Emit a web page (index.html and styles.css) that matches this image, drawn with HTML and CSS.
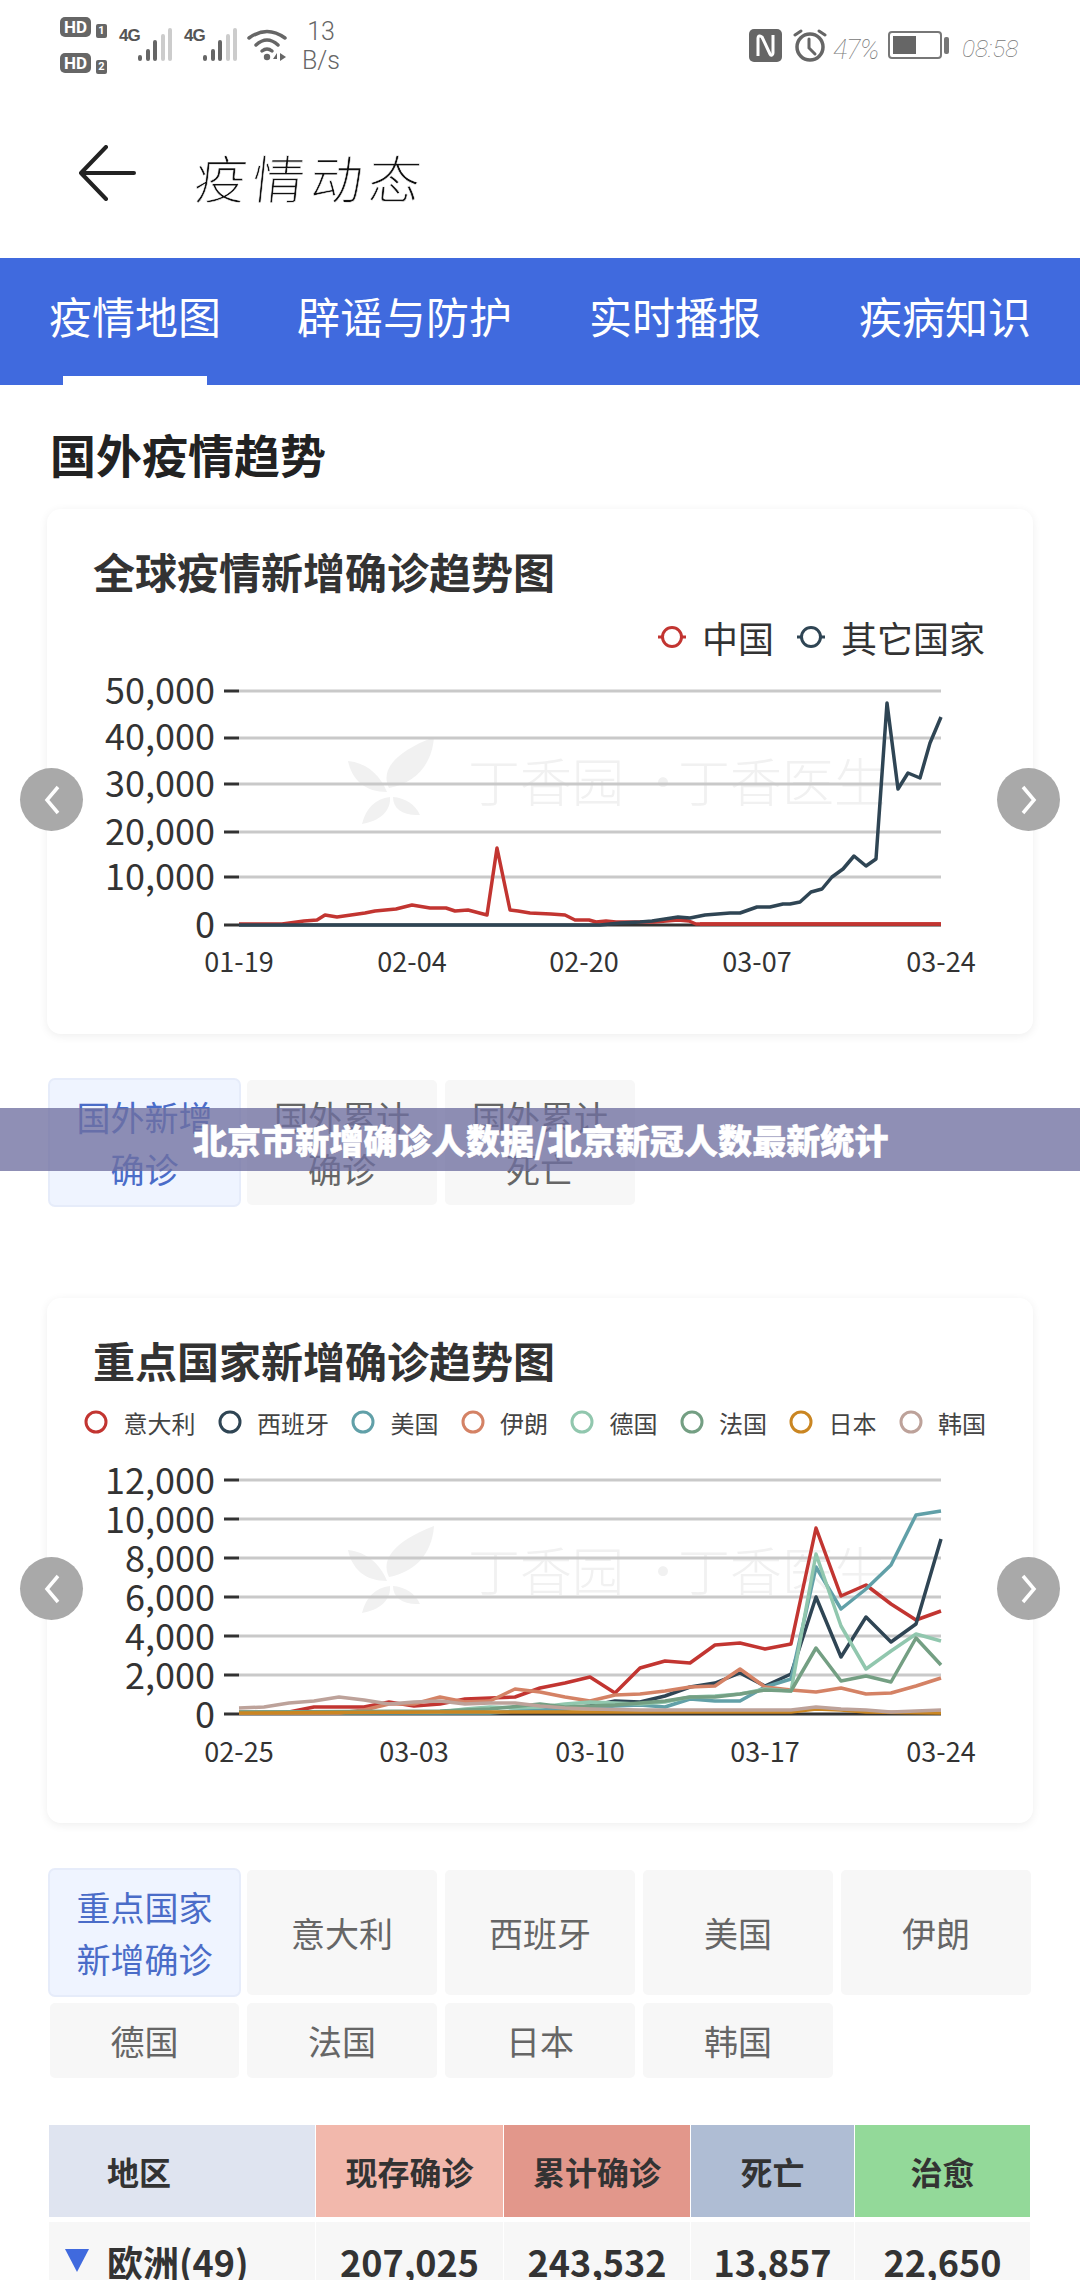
FILE: index.html
```html
<!DOCTYPE html>
<html lang="zh-CN">
<head>
<meta charset="utf-8">
<title>疫情动态</title>
<link rel="stylesheet" href="styles.css">
</head>
<body>
<div class="page">
  <div class="status">
    <div class="status-left">
      <div class="hd-stack">
        <div class="hd-row"><span class="hd">HD</span><span class="sim">1</span></div>
        <div class="hd-row"><span class="hd">HD</span><span class="sim">2</span></div>
      </div>
      <div class="signal"><span class="net">4G</span>
        <svg class="bars" width="36" height="33" viewBox="0 0 36 33"><g stroke-width="4" stroke-linecap="round" fill="none"><path class="bar-on" d="M3 31v-2M11 31v-8M18 31V14"/><path class="bar-off" d="M26 31V8M33 31V2"/></g></svg>
      </div>
      <div class="signal"><span class="net">4G</span>
        <svg class="bars" width="36" height="33" viewBox="0 0 36 33"><g stroke-width="4" stroke-linecap="round" fill="none"><path class="bar-on" d="M3 31v-2M11 31v-8M18 31V14"/><path class="bar-off" d="M26 31V8M33 31V2"/></g></svg>
      </div>
      <svg class="wifi" width="42" height="34" viewBox="0 0 42 34"><g fill="none" stroke="#666" stroke-width="3.5" stroke-linecap="round"><path d="M2 10Q20-3 38 10"/><path d="M9 17Q20 7 31 17"/><path d="M15 23Q20 19 25 23"/></g><circle cx="20" cy="29" r="3.2" fill="#666"/><path d="M26 31l4-6v6zM33 25l6 4-6 4z" fill="#666"/></svg>
      <div class="speed"><span>13</span><span>B/s</span></div>
    </div>
    <div class="status-right">
      <svg width="33" height="33" viewBox="0 0 33 33"><rect width="33" height="33" rx="5" fill="#666"/><path d="M9 27V9c0-2 2-3 4-1l8 17c1 2 3 1 3-1V6" fill="none" stroke="#fff" stroke-width="3"/></svg>
      <svg class="alarm" width="34" height="34" viewBox="0 0 34 34"><g fill="none" stroke="#666" stroke-linecap="round"><circle cx="17" cy="19" r="13" stroke-width="3.5"/><path d="M16 11v9l6 6" stroke-width="3"/><path d="M2 7l6-4M32 7l-6-4" stroke-width="3"/></g></svg>
      <span class="battery-pct">47%</span>
      <span class="battery"><span class="battery-fill"></span></span>
      <span class="battery-cap"></span>
      <span class="clock">08:58</span>
    </div>
  </div>

  <header class="topbar">
    <svg class="back" width="58" height="56" viewBox="0 0 58 56"><path d="M28 2L3 28l25 26M3 28h53" fill="none" stroke="#222" stroke-width="4" stroke-linecap="round" stroke-linejoin="round"/></svg>
    <h1 class="topbar-title">疫情动态</h1>
  </header>

  <nav class="tabs">
    <span class="tab tab-on">疫情地图</span>
    <span class="tab">辟谣与防护</span>
    <span class="tab">实时播报</span>
    <span class="tab tab-last">疾病知识</span>
  </nav>

  <main class="content">
    <h2 class="section-title">国外疫情趋势</h2>

    <section class="card">
      <h3 class="card-title">全球疫情新增确诊趋势图</h3>
      <div class="legend legend-large">
        <span class="legend-item"><svg class="mark s-red" width="30" height="24" viewBox="0 0 30 24"><path d="M1 12h4M25 12h4"/><circle cx="15" cy="12" r="9.5"/></svg>中国</span>
        <span class="legend-item"><svg class="mark s-navy" width="30" height="24" viewBox="0 0 30 24"><path d="M1 12h4M25 12h4"/><circle cx="15" cy="12" r="9.5"/></svg>其它国家</span>
      </div>
      <svg class="chart" viewBox="47 670 986 330" width="986" height="330">
        <g class="mark-leaf"><path d="M434 737C395 752 380 770 389 788 415 783 432 765 434 737z"/><path d="M348 761C352 780 365 792 387 792 380 775 367 763 348 761z"/><path d="M362 824C366 808 375 799 390 797 391 811 380 821 362 824z"/><path d="M420 815C415 804 405 798 393 797 393 809 403 816 420 815z"/></g>
        <text class="mark-text" x="468" y="802">丁香园</text><text class="mark-text" x="637" y="802">·</text><text class="mark-text" x="678" y="802">丁香医生</text>
        <g class="grid"><path d="M239 691H941M239 738H941M239 784H941M239 832H941M239 877H941"/></g>
        <path class="axis" d="M224 691h15M224 738h15M224 784h15M224 832h15M224 877h15M224 925H941"/>
        <g class="y-labels"><text x="215" y="704">50,000</text><text x="215" y="750">40,000</text><text x="215" y="797">30,000</text><text x="215" y="845">20,000</text><text x="215" y="890">10,000</text><text x="215" y="938">0</text></g>
        <g class="x-labels"><text x="239" y="972">01-19</text><text x="412" y="972">02-04</text><text x="584" y="972">02-20</text><text x="757" y="972">03-07</text><text x="941" y="972">03-24</text></g>
        <polyline class="line s-red" points="239,924 282,924 304,921 317,920 325,915 337,917 351,915 365,913 375,911 396,909 412,905 430,908 446,908 455,911 468,910 487,915 497,848 510,910 518,911 530,913 551,914 565,915 575,920 589,920 596,922 606,921 616,922 654,922 678,920 689,921 696,924 941,924"/>
        <polyline class="line s-navy" points="239,925 600,925 620,923 640,922 652,921 665,919 678,917 690,918 705,915 730,913 740,913 757,907 770,907 783,904 790,904 800,902 811,892 822,889 832,877 843,869 854,856 866,866 876,859 887,703 898,789 908,773 920,778 930,743 941,717"/>
        <path class="line s-red" d="M700 924H941"/>
      </svg>
      <button class="nav-btn nav-prev" aria-label="上一个"><svg width="16" height="30" viewBox="0 0 16 30"><path d="M14 2L3 15l11 13"/></svg></button>
      <button class="nav-btn nav-next" aria-label="下一个"><svg width="16" height="30" viewBox="0 0 16 30"><path d="M2 2l11 13L2 28"/></svg></button>
    </section>

    <div class="pills pills-first">
      <span class="pill pill-on">国外新增<br>确诊</span>
      <span class="pill">国外累计<br>确诊</span>
      <span class="pill">国外累计<br>死亡</span>
    </div>

    <section class="card card-second">
      <h3 class="card-title">重点国家新增确诊趋势图</h3>
      <div class="legend legend-small">
        <span class="legend-item"><svg class="mark s-red" width="28" height="24" viewBox="0 0 28 24"><circle cx="14" cy="12" r="10"/></svg>意大利</span>
        <span class="legend-item"><svg class="mark s-navy" width="28" height="24" viewBox="0 0 28 24"><circle cx="14" cy="12" r="10"/></svg>西班牙</span>
        <span class="legend-item"><svg class="mark s-teal" width="28" height="24" viewBox="0 0 28 24"><circle cx="14" cy="12" r="10"/></svg>美国</span>
        <span class="legend-item"><svg class="mark s-orange" width="28" height="24" viewBox="0 0 28 24"><circle cx="14" cy="12" r="10"/></svg>伊朗</span>
        <span class="legend-item"><svg class="mark s-mint" width="28" height="24" viewBox="0 0 28 24"><circle cx="14" cy="12" r="10"/></svg>德国</span>
        <span class="legend-item"><svg class="mark s-sage" width="28" height="24" viewBox="0 0 28 24"><circle cx="14" cy="12" r="10"/></svg>法国</span>
        <span class="legend-item"><svg class="mark s-gold" width="28" height="24" viewBox="0 0 28 24"><circle cx="14" cy="12" r="10"/></svg>日本</span>
        <span class="legend-item"><svg class="mark s-rose" width="28" height="24" viewBox="0 0 28 24"><circle cx="14" cy="12" r="10"/></svg>韩国</span>
      </div>
      <svg class="chart" viewBox="47 1460 986 330" width="986" height="330">
        <g class="mark-leaf"><path d="M434 1527C395 1542 380 1560 389 1578 415 1573 432 1555 434 1527z"/><path d="M348 1551C352 1570 365 1582 387 1582 380 1565 367 1553 348 1551z"/><path d="M362 1614C366 1598 375 1589 390 1587 391 1601 380 1611 362 1614z"/><path d="M420 1605C415 1594 405 1588 393 1587 393 1599 403 1606 420 1605z"/></g>
        <text class="mark-text" x="468" y="1592">丁香园</text><text class="mark-text" x="637" y="1592">·</text><text class="mark-text" x="678" y="1592">丁香医生</text>
        <g class="grid"><path d="M239 1481H941M239 1520H941M239 1559H941M239 1598H941M239 1637H941M239 1676H941"/></g>
        <path class="axis" d="M224 1481h15M224 1520h15M224 1559h15M224 1598h15M224 1637h15M224 1676h15M224 1715H941"/>
        <g class="y-labels"><text x="215" y="1495">12,000</text><text x="215" y="1534">10,000</text><text x="215" y="1573">8,000</text><text x="215" y="1612">6,000</text><text x="215" y="1651">4,000</text><text x="215" y="1690">2,000</text><text x="215" y="1729">0</text></g>
        <g class="x-labels"><text x="239" y="1763">02-25</text><text x="414" y="1763">03-03</text><text x="590" y="1763">03-10</text><text x="765" y="1763">03-17</text><text x="941" y="1763">03-24</text></g>
        <polyline class="line s-red" points="239,1713 264,1713 289,1713 314,1708 339,1708 364,1708 389,1703 414,1707 440,1705 465,1700 490,1699 515,1698 540,1689 565,1684 590,1678 615,1694 640,1669 665,1662 690,1664 715,1646 740,1644 765,1650 791,1645 816,1529 841,1597 866,1586 891,1605 916,1621 941,1612"/>
        <polyline class="line s-navy" points="239,1714 490,1714 515,1713 540,1712 565,1710 590,1707 615,1702 640,1703 665,1697 690,1688 715,1684 740,1674 765,1687 791,1675 816,1598 841,1658 866,1618 891,1643 916,1625 941,1540"/>
        <polyline class="line s-teal" points="239,1714 490,1714 515,1712 540,1711 565,1710 590,1709 615,1707 640,1706 665,1708 690,1700 715,1702 740,1702 765,1688 791,1680 816,1568 841,1610 866,1590 891,1566 916,1516 941,1512"/>
        <polyline class="line s-orange" points="239,1714 339,1714 364,1711 389,1705 414,1705 440,1698 465,1703 490,1702 515,1690 540,1693 565,1698 590,1702 615,1696 640,1695 665,1692 690,1688 715,1687 740,1670 765,1688 791,1691 816,1693 841,1689 866,1695 891,1694 916,1687 941,1679"/>
        <polyline class="line s-mint" points="239,1713 440,1713 465,1710 490,1708 515,1709 540,1708 565,1705 590,1703 615,1704 640,1705 665,1703 690,1698 715,1697 740,1695 765,1690 791,1692 816,1555 841,1627 866,1670 891,1652 916,1635 941,1642"/>
        <polyline class="line s-sage" points="239,1713 440,1712 490,1710 540,1705 565,1708 590,1707 615,1706 640,1704 665,1702 690,1698 715,1698 740,1695 765,1691 791,1692 816,1649 841,1682 866,1677 891,1683 916,1639 941,1666"/>
        <polyline class="line s-gold" points="239,1714 440,1713 590,1713 640,1713 791,1713 816,1710 841,1711 866,1713 941,1714"/>
        <polyline class="line s-rose" points="239,1709 264,1708 289,1704 314,1702 339,1698 364,1701 389,1705 414,1703 440,1702 465,1705 490,1704 515,1704 540,1707 565,1709 590,1710 640,1711 791,1711 816,1708 841,1710 866,1711 891,1713 916,1712 941,1711"/>
      </svg>
      <button class="nav-btn nav-prev" aria-label="上一个"><svg width="16" height="30" viewBox="0 0 16 30"><path d="M14 2L3 15l11 13"/></svg></button>
      <button class="nav-btn nav-next" aria-label="下一个"><svg width="16" height="30" viewBox="0 0 16 30"><path d="M2 2l11 13L2 28"/></svg></button>
    </section>

    <div class="pills pills-second">
      <span class="pill pill-on">重点国家<br>新增确诊</span>
      <span class="pill">意大利</span>
      <span class="pill">西班牙</span>
      <span class="pill">美国</span>
      <span class="pill">伊朗</span>
      <span class="pill">德国</span>
      <span class="pill">法国</span>
      <span class="pill">日本</span>
      <span class="pill">韩国</span>
    </div>

    <div class="stats">
      <div class="th th-area">地区</div>
      <div class="th th-now">现存确诊</div>
      <div class="th th-total">累计确诊</div>
      <div class="th th-dead">死亡</div>
      <div class="th th-cured">治愈</div>
      <div class="td td-area"><span class="caret"></span>欧洲(49)</div>
      <div class="td">207,025</div>
      <div class="td">243,532</div>
      <div class="td">13,857</div>
      <div class="td">22,650</div>
    </div>
  </main>

  <div class="headline">北京市新增确诊人数据/北京新冠人数最新统计</div>
</div>
</body>
</html>
```
FILE: styles.css
```css
* { box-sizing: border-box; }

html, body {
  margin: 0;
  padding: 0;
  background: #fff;
}

.page {
  position: relative;
  width: 1080px;
  height: 2280px;
  overflow: hidden;
  font-family: "Noto Sans CJK SC", "Noto Sans", Roboto, sans-serif;
  color: #333;
}

/* status bar */
.status {
  height: 90px;
  display: flex;
  justify-content: space-between;
  padding: 0 62px 0 60px;
}

.status-left {
  display: flex;
  align-items: flex-start;
}

.hd-stack {
  display: flex;
  flex-direction: column;
  gap: 16px;
  padding-top: 17px;
  width: 59px;
}

.hd-row {
  display: flex;
  align-items: flex-end;
  gap: 5px;
}

.hd {
  width: 31px;
  height: 20px;
  border-radius: 5px;
  background: #666;
  color: #fff;
  font: 700 17px/20px Roboto, sans-serif;
  text-align: center;
}

.sim {
  width: 11px;
  height: 14px;
  margin-bottom: -1px;
  border-radius: 2px;
  background: #666;
  color: #fff;
  font: 700 11px/14px Roboto, sans-serif;
  text-align: center;
}

.signal {
  display: flex;
  align-items: flex-start;
  width: 65px;
  padding-top: 28px;
}

.net {
  width: 18px;
  color: #555;
  font: 700 17px/16px "Liberation Sans", sans-serif;
  letter-spacing: -1px;
}

.bar-on { stroke: #666; }
.bar-off { stroke: #ccc; }

.wifi {
  margin: 28px 14px 0 -2px;
}

.speed {
  display: flex;
  flex-direction: column;
  align-items: center;
  width: 36px;
  margin-top: 17px;
  color: #666;
  font: 300 25px/29px Roboto, sans-serif;
}

.status-right {
  display: flex;
  align-items: flex-start;
  padding-top: 29px;
  color: #777;
}

.alarm {
  margin: -1px 6px 0 11px;
}

.battery-pct {
  width: 49px;
  margin-top: 6px;
  font: italic 100 27px/30px Roboto, sans-serif;
  letter-spacing: -1px;
}

.battery {
  width: 54px;
  height: 28px;
  margin: 2px 2px 0 6px;
  padding: 3px;
  border: 2px solid #777;
  border-radius: 4px;
}

.battery-fill {
  display: block;
  width: 23px;
  height: 100%;
  background: #666;
}

.battery-cap {
  width: 5px;
  height: 17px;
  margin-top: 8px;
  border-radius: 2px;
  background: #777;
}

.clock {
  width: 56px;
  margin: 7px 0 0 13px;
  white-space: nowrap;
  font: italic 100 24.5px/26px Roboto, sans-serif;
}

/* title row */
.topbar {
  height: 168px;
  display: flex;
  align-items: center;
  gap: 59px;
  padding-left: 78px;
}

.back {
  margin-top: -2px;
}

.topbar-title {
  margin: 6px 0 0;
  font-size: 52px;
  line-height: 60px;
  font-weight: 300;
  color: #111;
  letter-spacing: 6px;
  transform: skewX(-6deg);
  -webkit-text-stroke: 0.6px #fff;
}

/* section tabs */
.tabs {
  height: 127px;
  display: flex;
  align-items: flex-start;
  gap: 76px;
  padding: 0 49px 0 49px;
  background: #406ade;
  color: #fff;
  font-size: 43px;
}

.tab {
  position: relative;
  margin-top: 27px;
  line-height: 60px;
}

.tab:nth-child(3) {
  margin-left: 1px;
}

.tab-last {
  margin-left: auto;
}

.tab-on::after {
  content: "";
  position: absolute;
  left: 14px;
  bottom: -40px;
  width: 144px;
  height: 9px;
  background: #fff;
}

/* page body */
.content {
  display: flex;
  flex-direction: column;
}

.section-title {
  margin: 38px 0 0 50px;
  font-size: 46px;
  line-height: 60px;
  font-weight: 700;
  color: #222;
}

.card {
  position: relative;
  width: 986px;
  height: 525px;
  margin: 26px 0 0 47px;
  padding-top: 36px;
  background: #fff;
  border-radius: 14px;
  box-shadow: 0 2px 10px rgba(0, 0, 0, 0.07);
}

.card-second {
  margin-top: 93px;
}

.card-title {
  margin: 0 0 0 46px;
  font-size: 42px;
  line-height: 52px;
  font-weight: 700;
  color: #333;
}

.legend {
  display: flex;
  height: 42px;
  align-items: center;
  color: #333;
}

.legend-large {
  justify-content: flex-end;
  gap: 22px;
  margin-top: 19px;
  padding-right: 48px;
  font-size: 36px;
}

.legend-large .legend-item {
  gap: 15px;
}

.legend-small {
  gap: 20px;
  margin-top: 15px;
  padding-left: 35px;
  font-size: 24px;
  color: #444;
}

.legend-small .legend-item {
  gap: 13.5px;
}

.legend-item {
  display: flex;
  align-items: center;
}

.mark {
  flex: none;
  fill: none;
}

.mark path,
.mark circle {
  stroke-width: 3;
}

.chart {
  display: block;
  position: absolute;
  left: 0;
  top: 161px;
}

.mark-leaf { fill: #f1f1f1; }

.mark-text {
  font-size: 52px;
  font-weight: 300;
  fill: #f1f1f1;
}

.grid path {
  fill: none;
  stroke: #c9c9c9;
  stroke-width: 3;
}

.axis {
  fill: none;
  stroke: #333;
  stroke-width: 3;
}

.y-labels text {
  font-size: 36px;
  fill: #333;
  text-anchor: end;
}

.x-labels text {
  font-size: 27px;
  fill: #333;
  text-anchor: middle;
}

.line {
  fill: none;
  stroke-width: 3.5;
  stroke-linejoin: round;
}

.s-red { stroke: #c23531; }
.s-navy { stroke: #2f4554; }
.s-teal { stroke: #61a0a8; }
.s-orange { stroke: #d48265; }
.s-mint { stroke: #91c7ae; }
.s-sage { stroke: #749f83; }
.s-gold { stroke: #ca8622; }
.s-rose { stroke: #bda29a; }

.nav-btn {
  position: absolute;
  top: 259px;
  width: 63px;
  height: 63px;
  padding: 0;
  border: 0;
  border-radius: 50%;
  background: #a9a9a9;
  display: flex;
  align-items: center;
  justify-content: center;
}

.nav-btn path {
  fill: none;
  stroke: #fff;
  stroke-width: 3.5;
}

.nav-prev { left: -27px; }
.nav-next { right: -27px; }

/* option buttons */
.pills {
  display: grid;
  grid-template-columns: 189px repeat(4, 190px);
  column-gap: 8px;
  row-gap: 8px;
  margin: 46px 0 0 50px;
}

.pills-first {
  grid-auto-rows: 125px;
}

.pills-second {
  grid-template-rows: 125px 75px;
  margin-top: 47px;
}

.pill {
  display: flex;
  align-items: center;
  justify-content: center;
  text-align: center;
  background: #f7f7f7;
  border-radius: 5px;
  color: #666;
  font-size: 34px;
  line-height: 52px;
}

.pill-on {
  background: #eff4ff;
  color: #4a6cc8;
  box-shadow: 0 0 0 2px #e6ecfa;
}

/* figures table */
.stats {
  display: grid;
  grid-template-columns: 267px 188px 187px 164px 176px;
  grid-template-rows: 92px 100px;
  row-gap: 5px;
  margin: 47px 0 0 48px;
  width: 982px;
}

.th {
  display: flex;
  align-items: center;
  justify-content: center;
  border-left: 1px solid #fff;
  font-size: 32px;
  font-weight: 700;
  color: #333;
}

.th-area {
  justify-content: flex-start;
  padding-left: 58px;
  background: #dfe4f0;
}

.th-now { background: #f2b8ac; }
.th-total { background: #e2978b; }
.th-dead { background: #afbdd4; }
.th-cured { background: #93d999; }

.td {
  display: flex;
  align-items: flex-start;
  justify-content: center;
  padding-top: 14px;
  background: #f7f7f7;
  border-left: 1px solid #fff;
  font-size: 36px;
  line-height: 50px;
  font-weight: 700;
  color: #333;
}

.td-area {
  justify-content: flex-start;
  padding-left: 16px;
}

.caret {
  flex: none;
  width: 0;
  height: 0;
  margin: 13px 18px 0 0;
  border-left: 12px solid transparent;
  border-right: 12px solid transparent;
  border-top: 23px solid #406ade;
}

/* banner laid over the page */
.headline {
  position: absolute;
  left: 0;
  right: 0;
  top: 1108px;
  height: 63px;
  padding-left: 193px;
  background: rgba(112, 112, 160, 0.78);
  color: #fff;
  font-size: 34px;
  line-height: 64px;
  font-weight: 900;
  letter-spacing: 0.12px;
  -webkit-text-stroke: 0.5px #fff;
}
```
